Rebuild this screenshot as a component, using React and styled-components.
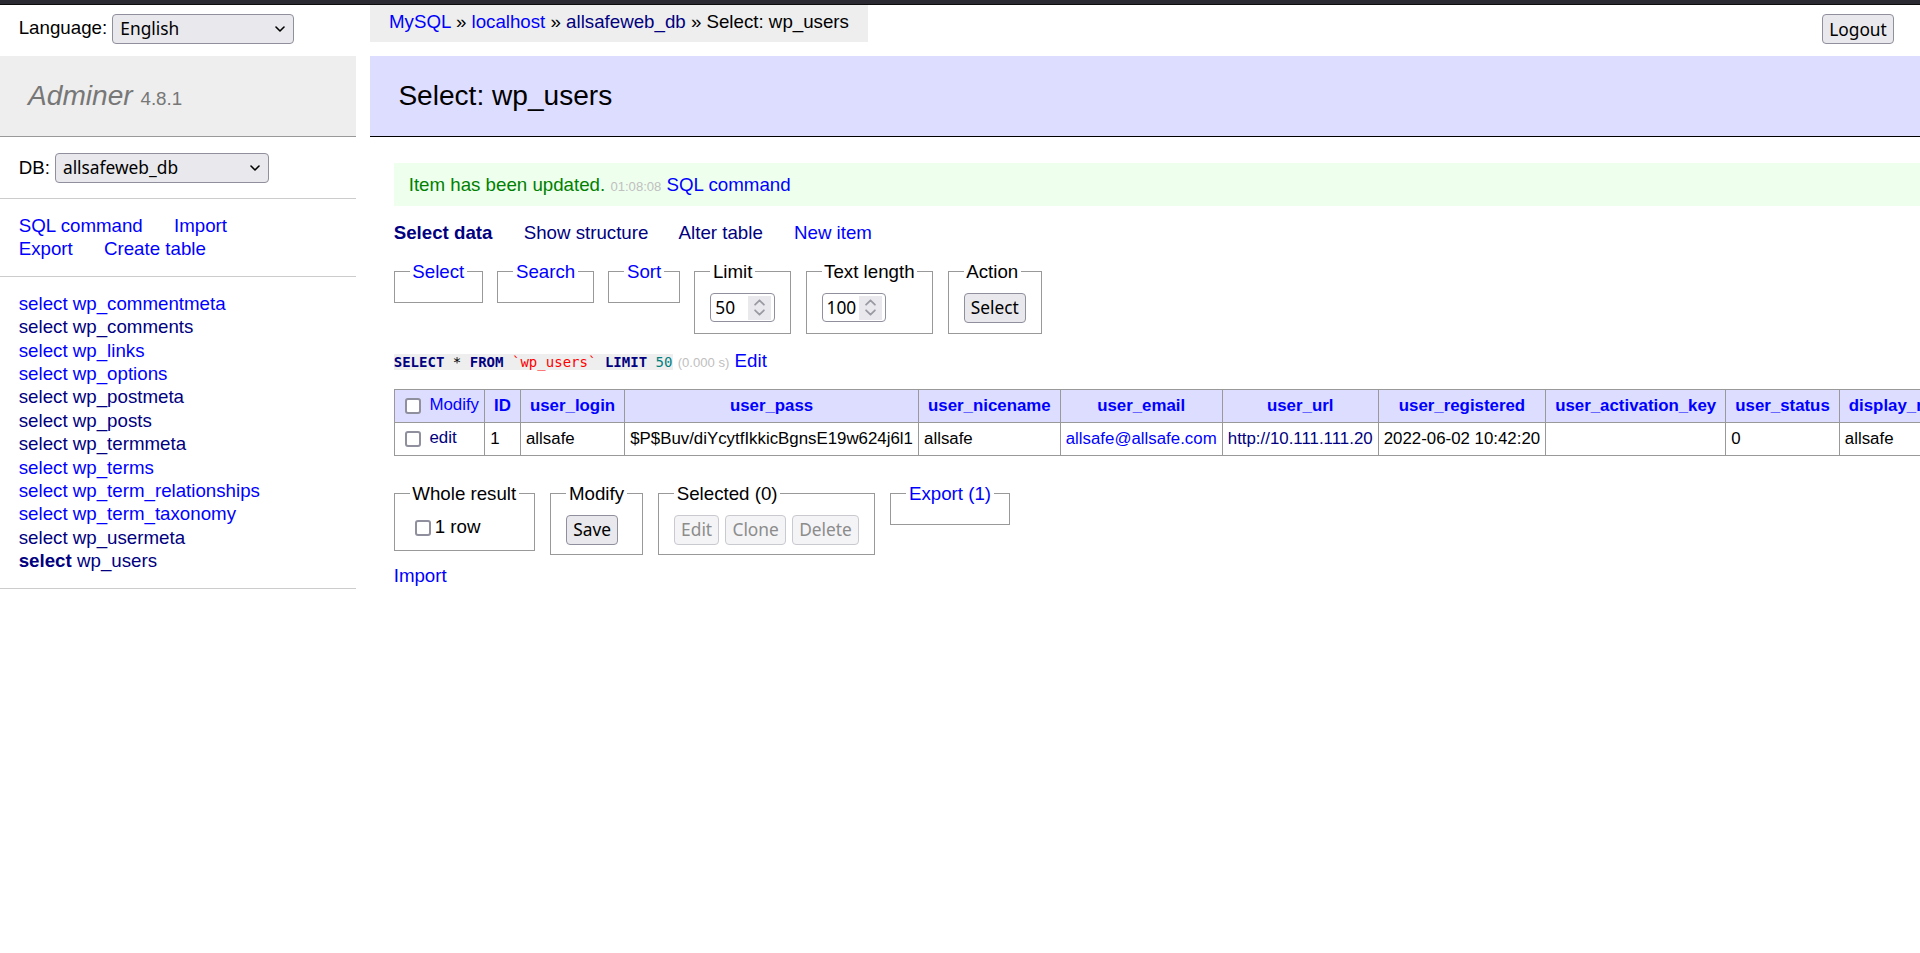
import React from "react";
import styled, { createGlobalStyle } from "styled-components";

const GlobalStyle = createGlobalStyle`
  html, body {
    margin: 0;
    padding: 0;
    background: #fff;
  }
  body {
    color: #000;
    font-family: "Liberation Sans", Arial, Helvetica, sans-serif;
    font-size: 18.72px;
    line-height: 1.25;
  }
`;

const Page = styled.div`
  width: 100%;
  min-height: 100vh;
  overflow: hidden;
  display: flex;
  flex-direction: column;
`;

const BrowserEdge = styled.div`
  height: 5px;
  background: #2b2a33;
  border-bottom: 1px solid #0c0c0d;
  box-sizing: border-box;
`;

const TopRow = styled.div`
  display: flex;
  align-items: flex-start;
  height: 51px;
`;

const LangBox = styled.div`
  width: 356px;
  box-sizing: border-box;
  padding: 5.6px 18.72px;
  line-height: 33.7px;
  white-space: nowrap;
`;

const Breadcrumb = styled.div`
  margin-left: 14.3px;
  height: 37.44px;
  line-height: 33.7px;
  padding: 0 18.72px;
  background: #eee;
  white-space: nowrap;
`;

const Link = styled.a`
  color: ${(p) => (p.$visited ? "#000080" : "#0000ff")};
  font-weight: ${(p) => (p.$active ? "bold" : "inherit")};
  text-decoration: none;
  cursor: pointer;
`;

const NavLink = styled(Link)`
  margin-right: 26px;
  white-space: nowrap;
`;

const Button = styled.button`
  font-family: "Noto Sans", "DejaVu Sans", sans-serif;
  font-size: 17.33px;
  height: 30px;
  box-sizing: border-box;
  padding: 0 6px;
  border-radius: 4px;
  border: 1px solid ${(p) => (p.disabled ? "#c9c9d0" : "#8f8f9d")};
  background: ${(p) => (p.disabled ? "#f4f4f6" : "#e9e9ed")};
  color: ${(p) => (p.disabled ? "#8c8c8c" : "#000")};
  vertical-align: middle;
  line-height: 1;
`;

const Logout = styled(Button)`
  margin-left: auto;
  margin-top: 9.4px;
  margin-right: 26px;
  width: 72px;
`;

const SelectBox = styled.span`
  display: inline-flex;
  align-items: center;
  justify-content: space-between;
  vertical-align: middle;
  box-sizing: border-box;
  width: ${(p) => p.$w}px;
  height: 30px;
  padding: 0 8px 0 7px;
  border: 1px solid #8f8f9d;
  border-radius: 4px;
  background: #e9e9ed;
  font-family: "Noto Sans", "DejaVu Sans", sans-serif;
  font-size: 17.33px;
  line-height: 1;
`;

const Layout = styled.div`
  display: flex;
  align-items: flex-start;
`;

const Menu = styled.div`
  width: 356px;
  flex: none;
`;

const Brand = styled.h1`
  margin: 0;
  font-size: 28.08px;
  line-height: 1.25;
  padding: 22.46px 28.08px;
  font-weight: normal;
  color: #777;
  background: #eee;
  border-bottom: 1px solid #999;
  white-space: nowrap;
`;

const BrandName = styled.span`
  font-style: italic;
`;

const Version = styled.span`
  font-size: 18.8px;
`;

const MenuSection = styled.div`
  padding: 15px 18.72px;
  border-bottom: 1px solid #ccc;
  line-height: 23.4px;
`;

const DbLine = styled.div`
  height: 31px;
  display: flex;
  align-items: center;
  gap: 5px;
`;

const TableList = styled.ul`
  margin: 0;
  padding: 15px 18.72px;
  list-style: none;
  border-bottom: 1px solid #ccc;
  white-space: nowrap;
`;

const TableItem = styled.li`
  line-height: 23.4px;
`;

const Content = styled.div`
  flex: none;
  margin-left: 14.3px;
  width: max-content;
  min-width: calc(100vw - 370.3px);
`;

const Title = styled.h2`
  margin: 0 0 26px;
  font-size: 28.08px;
  line-height: 1.25;
  padding: 22.46px 28.08px;
  font-weight: normal;
  background: #ddf;
  border-bottom: 1px solid #000;
`;

const Inner = styled.div`
  padding-left: 23.4px;
`;

const Message = styled.div`
  margin-right: 26px;
  padding: 9.6px 15px 10.2px;
  background: #efe;
  color: #008000;
`;

const Time = styled.span`
  color: silver;
  font-size: 13.1px;
`;

const Para = styled.p`
  margin: 15px 26px 0 0;
`;

const FieldRow = styled.div`
  display: flex;
  align-items: flex-start;
  gap: ${(p) => p.$gap}px;
  margin-top: ${(p) => p.$top}px;
`;

const Fieldset = styled.fieldset`
  margin: 0;
  padding: 9.36px 15px;
  border: 1px solid #999;
  min-width: 0;
`;

const Legend = styled.legend`
  padding: 0 2.6px;
  line-height: 23.4px;
`;

const FieldBody = styled.div`
  display: flex;
  align-items: center;
  gap: 6.3px;
  height: ${(p) => p.$h}px;
`;

const NumberBox = styled.span`
  display: inline-flex;
  align-items: center;
  justify-content: space-between;
  box-sizing: border-box;
  width: 64.7px;
  height: 29px;
  padding: 0 3px 0 4px;
  border: 1px solid #8f8f9d;
  border-radius: 4px;
  background: #fff;
  font-family: "Noto Sans", "DejaVu Sans", sans-serif;
  font-size: 17.33px;
`;

const Spinner = styled.span`
  width: 23px;
  height: 24px;
  background: #e9e9ed;
  display: flex;
  flex-direction: column;
  align-items: center;
  justify-content: center;
  gap: 3px;
`;

const Check = styled.span`
  display: inline-block;
  vertical-align: middle;
  box-sizing: border-box;
  width: 16px;
  height: 16px;
  margin: ${(p) => (p.$tall ? "4.6px 4px 4.6px 5px" : "4px 4px 4px 5px")};
  border: 2px solid #8f8f9d;
  border-radius: 3px;
  background: #fff;
`;

const Code = styled.code`
  font-family: "DejaVu Sans Mono", "Liberation Mono", monospace;
  font-size: 14.04px;
  background: #eee;
`;

const Kw = styled.b`
  color: #000080;
`;

const Bac = styled.span`
  color: red;
`;

const Num = styled.span`
  color: #007f7f;
`;

const Grid = styled.table`
  margin: 16.85px 26px 0 0;
  border-collapse: collapse;
  font-size: 16.85px;
  line-height: 1.25;
  white-space: nowrap;
`;

const HeadCell = styled.th`
  border: 1px solid #999;
  padding: 3.37px 9px;
  background: #ddf;
  text-align: center;
  font-weight: bold;
`;

const HeadCheckCell = styled.td`
  border: 1px solid #999;
  padding: 3.37px 5.05px;
  background: #ddf;
`;

const Cell = styled.td`
  border: 1px solid #999;
  padding: 3.37px 5.05px;
  background: #fff;
`;

const Footer = styled.div`
  padding: 26px 0 9.36px;
`;

const ImportLine = styled.div`
  line-height: 23.4px;
`;

const Chevron = ({ up, color = "#000", w = 10, h = 6 }) => (
  <svg width={w} height={h} viewBox="0 0 10 6" fill="none">
    <path
      d={up ? "M1 5 L5 1 L9 5" : "M1 1 L5 5 L9 1"}
      stroke={color}
      strokeWidth="1.6"
      strokeLinecap="round"
      strokeLinejoin="round"
    />
  </svg>
);

const Select = ({ w, children }) => (
  <SelectBox $w={w}>
    <span>{children}</span>
    <Chevron />
  </SelectBox>
);

const NumberInput = ({ value }) => (
  <NumberBox>
    <span>{value}</span>
    <Spinner>
      <Chevron up color="#9a9aa4" w={11} h={7} />
      <Chevron color="#9a9aa4" w={11} h={7} />
    </Spinner>
  </NumberBox>
);

const tables = [
  ["wp_commentmeta", false],
  ["wp_comments", true],
  ["wp_links", false],
  ["wp_options", false],
  ["wp_postmeta", true],
  ["wp_posts", true],
  ["wp_termmeta", true],
  ["wp_terms", false],
  ["wp_term_relationships", false],
  ["wp_term_taxonomy", false],
  ["wp_usermeta", true],
  ["wp_users", true, true],
];

const columns = [
  "ID",
  "user_login",
  "user_pass",
  "user_nicename",
  "user_email",
  "user_url",
  "user_registered",
  "user_activation_key",
  "user_status",
  "display_name",
];

export default function App() {
  return (
    <Page>
      <GlobalStyle />
      <BrowserEdge />
      <TopRow>
        <LangBox>
          Language: <Select w={182}>English</Select>
        </LangBox>
        <Breadcrumb>
          <Link>MySQL</Link> » <Link>localhost</Link> » <Link $visited>allsafeweb_db</Link> » Select: wp_users
        </Breadcrumb>
        <Logout>Logout</Logout>
      </TopRow>

      <Layout>
        <Menu>
          <Brand>
            <BrandName>Adminer</BrandName> <Version>4.8.1</Version>
          </Brand>
          <MenuSection>
            <DbLine>
              DB: <Select w={214}>allsafeweb_db</Select>
            </DbLine>
          </MenuSection>
          <MenuSection>
            <NavLink>SQL command</NavLink> <NavLink>Import</NavLink>
            <br />
            <NavLink>Export</NavLink> <NavLink>Create table</NavLink>
          </MenuSection>
          <TableList>
            {tables.map(([name, visited, active]) => (
              <TableItem key={name}>
                <Link $visited={visited} $active={active}>
                  select
                </Link>{" "}
                <Link $visited={visited}>{name}</Link>
              </TableItem>
            ))}
          </TableList>
        </Menu>

        <Content>
          <Title>Select: wp_users</Title>
          <Inner>
            <Message>
              Item has been updated. <Time>01:08:08</Time> <Link>SQL command</Link>
            </Message>

            <Para>
              <NavLink $visited $active>
                Select data
              </NavLink>{" "}
              <NavLink $visited>Show structure</NavLink> <NavLink $visited>Alter table</NavLink>{" "}
              <NavLink>New item</NavLink>
            </Para>

            <FieldRow $gap={14.5} $top={15}>
              <Fieldset>
                <Legend>
                  <Link>Select</Link>
                </Legend>
              </Fieldset>
              <Fieldset>
                <Legend>
                  <Link>Search</Link>
                </Legend>
              </Fieldset>
              <Fieldset>
                <Legend>
                  <Link>Sort</Link>
                </Legend>
              </Fieldset>
              <Fieldset>
                <Legend>Limit</Legend>
                <FieldBody $h={31}>
                  <NumberInput value="50" />
                </FieldBody>
              </Fieldset>
              <Fieldset>
                <Legend>Text length</Legend>
                <FieldBody $h={31}>
                  <NumberInput value="100" />
                </FieldBody>
              </Fieldset>
              <Fieldset>
                <Legend>Action</Legend>
                <FieldBody $h={31}>
                  <Button>Select</Button>
                </FieldBody>
              </Fieldset>
            </FieldRow>

            <Para>
              <Code>
                <Kw>SELECT</Kw> * <Kw>FROM</Kw> <Bac>`wp_users`</Bac> <Kw>LIMIT</Kw> <Num>50</Num>
              </Code>{" "}
              <Time>(0.000 s)</Time> <Link>Edit</Link>
            </Para>

            <Grid>
              <thead>
                <tr>
                  <HeadCheckCell>
                    <Check $tall /> <Link>Modify</Link>
                  </HeadCheckCell>
                  {columns.map((c) => (
                    <HeadCell key={c}>
                      <Link>{c}</Link>
                    </HeadCell>
                  ))}
                </tr>
              </thead>
              <tbody>
                <tr>
                  <Cell>
                    <Check $tall /> <Link $visited>edit</Link>
                  </Cell>
                  <Cell>1</Cell>
                  <Cell>allsafe</Cell>
                  <Cell>$P$Buv/diYcytfIkkicBgnsE19w624j6l1</Cell>
                  <Cell>allsafe</Cell>
                  <Cell>
                    <Link>allsafe@allsafe.com</Link>
                  </Cell>
                  <Cell>
                    <Link $visited>http://10.111.111.20</Link>
                  </Cell>
                  <Cell>2022-06-02 10:42:20</Cell>
                  <Cell></Cell>
                  <Cell>0</Cell>
                  <Cell>allsafe</Cell>
                </tr>
              </tbody>
            </Grid>

            <Footer>
              <FieldRow $gap={15.5} $top={0}>
                <Fieldset>
                  <Legend>Whole result</Legend>
                  <FieldBody $h={26}>
                    <span>
                      <Check />
                      1 row
                    </span>
                  </FieldBody>
                </Fieldset>
                <Fieldset>
                  <Legend>Modify</Legend>
                  <FieldBody $h={30}>
                    <Button>Save</Button>
                  </FieldBody>
                </Fieldset>
                <Fieldset>
                  <Legend>Selected (0)</Legend>
                  <FieldBody $h={30}>
                    <Button disabled>Edit</Button>
                    <Button disabled>Clone</Button>
                    <Button disabled>Delete</Button>
                  </FieldBody>
                </Fieldset>
                <Fieldset>
                  <Legend>
                    <Link>Export (1)</Link>
                  </Legend>
                </Fieldset>
              </FieldRow>
            </Footer>

            <ImportLine>
              <Link>Import</Link>
            </ImportLine>
          </Inner>
        </Content>
      </Layout>
    </Page>
  );
}
